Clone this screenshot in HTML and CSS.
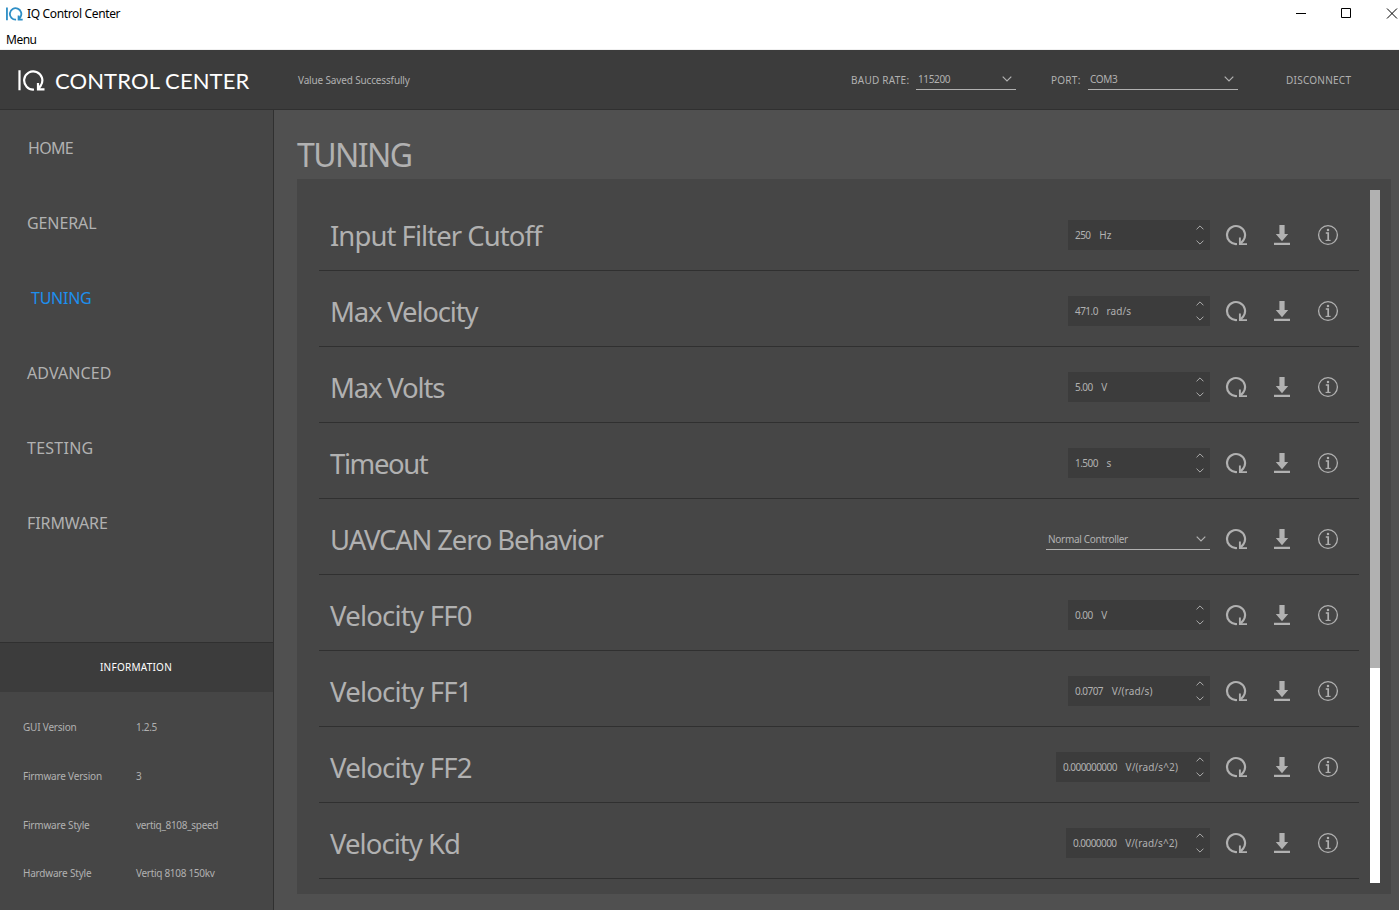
FILE: index.html
```
<!DOCTYPE html>
<html lang="en">
<head>
<meta charset="utf-8">
<title>IQ Control Center</title>
<link rel="stylesheet" href="styles.css">
</head>
<body>
<svg class="defs" width="0" height="0">
  <symbol id="refresh" viewBox="0 0 22 22">
    <path d="M12 20A9 9 0 1 1 18.2 16.5L15.5 19.5" fill="none" stroke="currentColor" stroke-width="2.2"/>
    <path d="M14.9 13.5V20.1H22" fill="none" stroke="currentColor" stroke-width="1.9"/>
  </symbol>
  <symbol id="save" viewBox="0 0 22 22">
    <path d="M8.4 1H13.6V10H17.2L11 17.2L4.8 10H8.4Z M3 18.7H19V21H3Z" fill="currentColor"/>
  </symbol>
  <symbol id="info" viewBox="0 0 22 22">
    <circle cx="11" cy="11" r="9.4" fill="none" stroke="currentColor" stroke-width="1.3"/>
    <circle cx="11" cy="5.9" r="1.25" fill="currentColor"/>
    <path d="M8.8 9H11.2V16.2" fill="none" stroke="currentColor" stroke-width="1.7"/>
    <path d="M8.6 16.4H13.6" fill="none" stroke="currentColor" stroke-width="1.1"/>
  </symbol>
  <symbol id="down" viewBox="0 0 10 6"><path d="M.7 .7L5 5L9.3 .7" fill="none" stroke="currentColor" stroke-width="1.2"/></symbol>
  <symbol id="logo" viewBox="0 0 27 21">
    <path d="M1.5 .3V20.3M16 19.5A9.1 9.1 0 1 1 22.8 15.5L20.3 18.8M20 13V19.4H26.5" fill="none" stroke="currentColor"/>
  </symbol>
</svg>
<div class="window">
  <div class="titlebar">
    <svg class="app-icon"><use href="#logo"/></svg>
    <span class="app-name">IQ Control Center</span>
    <svg class="win-buttons" viewBox="0 0 108 27">
      <path d="M5 13.5H15M50.5 8.5H59.5V17.5H50.5ZM96 8.5L106 18.5M106 8.5L96 18.5" fill="none" stroke="#000"/>
    </svg>
  </div>
  <div class="menubar">Menu</div>
  <header class="header">
    <svg class="logo"><use href="#logo"/></svg>
    <span class="brand">CONTROL CENTER</span>
    <span class="status">Value Saved Successfully</span>
    <span class="field-name caps">BAUD RATE:</span>
    <span class="select baud"><span>115200</span><svg class="chev"><use href="#down"/></svg></span>
    <span class="field-name caps port-name">PORT:</span>
    <span class="select port"><span>COM3</span><svg class="chev"><use href="#down"/></svg></span>
    <span class="disconnect caps">DISCONNECT</span>
  </header>
  <div class="body">
    <aside class="sidebar">
      <nav class="nav">
        <a class="home">HOME</a><a>GENERAL</a><a class="active">TUNING</a><a class="plain">ADVANCED</a><a class="wide">TESTING</a><a>FIRMWARE</a>
      </nav>
      <div class="info-head caps">INFORMATION</div>
      <dl class="info">
        <dt>GUI Version</dt><dd>1.2.5</dd>
        <dt>Firmware Version</dt><dd>3</dd>
        <dt>Firmware Style</dt><dd>vertiq_8108_speed</dd>
        <dt>Hardware Style</dt><dd>Vertiq 8108 150kv</dd>
      </dl>
    </aside>
    <main class="main">
      <h1 class="title">TUNING</h1>
      <section class="panel">
        <div class="rows">
          <div class="row"><span class="label loose">Input Filter Cutoff</span><span class="spin"><span class="num">250</span><span class="unit">Hz</span><span class="arrows"><svg class="up"><use href="#down"/></svg><svg><use href="#down"/></svg></span></span><svg class="icon"><use href="#refresh"/></svg><svg class="icon"><use href="#save"/></svg><svg class="icon"><use href="#info"/></svg></div>
          <div class="row"><span class="label">Max Velocity</span><span class="spin"><span class="num">471.0</span><span class="unit">rad/s</span><span class="arrows"><svg class="up"><use href="#down"/></svg><svg><use href="#down"/></svg></span></span><svg class="icon"><use href="#refresh"/></svg><svg class="icon"><use href="#save"/></svg><svg class="icon"><use href="#info"/></svg></div>
          <div class="row"><span class="label">Max Volts</span><span class="spin"><span class="num">5.00</span><span class="unit">V</span><span class="arrows"><svg class="up"><use href="#down"/></svg><svg><use href="#down"/></svg></span></span><svg class="icon"><use href="#refresh"/></svg><svg class="icon"><use href="#save"/></svg><svg class="icon"><use href="#info"/></svg></div>
          <div class="row"><span class="label tight">Timeout</span><span class="spin"><span class="num">1.500</span><span class="unit">s</span><span class="arrows"><svg class="up"><use href="#down"/></svg><svg><use href="#down"/></svg></span></span><svg class="icon"><use href="#refresh"/></svg><svg class="icon"><use href="#save"/></svg><svg class="icon"><use href="#info"/></svg></div>
          <div class="row"><span class="label">UAVCAN Zero Behavior</span><span class="select behavior"><span>Normal Controller</span><svg class="chev"><use href="#down"/></svg></span><svg class="icon"><use href="#refresh"/></svg><svg class="icon"><use href="#save"/></svg><svg class="icon"><use href="#info"/></svg></div>
          <div class="row"><span class="label looser">Velocity FF0</span><span class="spin"><span class="num">0.00</span><span class="unit">V</span><span class="arrows"><svg class="up"><use href="#down"/></svg><svg><use href="#down"/></svg></span></span><svg class="icon"><use href="#refresh"/></svg><svg class="icon"><use href="#save"/></svg><svg class="icon"><use href="#info"/></svg></div>
          <div class="row"><span class="label looser">Velocity FF1</span><span class="spin"><span class="num">0.0707</span><span class="unit">V/(rad/s)</span><span class="arrows"><svg class="up"><use href="#down"/></svg><svg><use href="#down"/></svg></span></span><svg class="icon"><use href="#refresh"/></svg><svg class="icon"><use href="#save"/></svg><svg class="icon"><use href="#info"/></svg></div>
          <div class="row"><span class="label looser">Velocity FF2</span><span class="spin spin-xl"><span class="num">0.000000000</span><span class="unit">V/(rad/s^2)</span><span class="arrows"><svg class="up"><use href="#down"/></svg><svg><use href="#down"/></svg></span></span><svg class="icon"><use href="#refresh"/></svg><svg class="icon"><use href="#save"/></svg><svg class="icon"><use href="#info"/></svg></div>
          <div class="row"><span class="label loose">Velocity Kd</span><span class="spin spin-l"><span class="num">0.0000000</span><span class="unit">V/(rad/s^2)</span><span class="arrows"><svg class="up"><use href="#down"/></svg><svg><use href="#down"/></svg></span></span><svg class="icon"><use href="#refresh"/></svg><svg class="icon"><use href="#save"/></svg><svg class="icon"><use href="#info"/></svg></div>
        </div>
        <div class="scrollbar"><div class="thumb"></div></div>
      </section>
    </main>
  </div>
</div>
</body>
</html>
```
FILE: styles.css
```
* { box-sizing: border-box; }
body { margin: 0; font-family: "Noto Sans", sans-serif; font-size: 10px; letter-spacing: -0.15px; color: #b1b1b1; white-space: nowrap; }
svg { display: block; flex: none; }
.defs { position: absolute; }
.window { display: flex; flex-direction: column; width: 1399px; height: 910px; overflow: hidden; background: #505050; }

.titlebar { display: flex; align-items: center; height: 27px; padding-left: 6px; background: #fff; color: #000; font-size: 12px; letter-spacing: -0.35px; }
.app-icon { width: 17px; height: 14px; margin-right: 4px; color: #2f8fc6; stroke-width: 2.9; }
.win-buttons { width: 108px; height: 27px; margin-left: auto; }
.menubar { height: 23px; padding-left: 6px; background: #fff; border-bottom: 1px solid #f0f0f0; color: #000; font-size: 12px; line-height: 25px; letter-spacing: -0.5px; }

.header { display: flex; align-items: center; height: 60px; padding-left: 18px; background: #3c3c3c; border-bottom: 1px solid #303030; }
.logo { width: 27px; height: 21px; margin-top: 1px; color: #fff; stroke-width: 2.2; }
.brand { width: 243px; margin-left: 10px; padding-top: 2px; font-family: Lato, sans-serif; font-size: 22px; letter-spacing: 0.1px; color: #fff; }
.status { width: 553px; }
.caps { letter-spacing: 0.25px; }
.field-name { width: 65px; }
.select { display: flex; align-items: center; justify-content: space-between; height: 20px; border-bottom: 1px solid #b1b1b1; padding: 0 4px 0 2px; letter-spacing: -0.35px; }
.chev { width: 10px; height: 6px; }
.baud { width: 100px; }
.port-name { width: 37px; margin-left: 35px; }
.port { width: 150px; }
.disconnect { margin-left: 48px; }

.body { display: flex; flex: 1; min-height: 0; }
.sidebar { display: flex; flex-direction: column; width: 274px; background: #464646; border-right: 1px solid #303030; }
.nav { display: flex; flex-direction: column; height: 532px; }
.nav a { height: 75px; padding-left: 27px; font-size: 16px; line-height: 76px; letter-spacing: -0.1px; }
.nav .home { padding-left: 28px; letter-spacing: -0.7px; }
.nav .active { padding-left: 31px; letter-spacing: -0.25px; color: #1d8fee; }
.nav .plain { letter-spacing: 0.1px; }
.nav .wide { letter-spacing: 0.25px; }
.info-head { height: 50px; padding-right: 1px; background: #3c3c3c; border-top: 1px solid #303030; color: #fff; line-height: 48px; text-align: center; }
.info { display: grid; grid-template-columns: 113px 1fr; grid-auto-rows: 48.7px; align-items: center; margin: 0; padding: 11px 0 0 23px; }
.info dt { letter-spacing: -0.2px; }
.info dd { margin: 0; letter-spacing: -0.3px; }

.main { flex: 1; padding: 23px 8px 0 23px; }
.title { height: 46px; margin: 0; font-size: 32px; font-weight: 400; line-height: 44px; letter-spacing: -1.6px; }
.panel { display: flex; height: 715px; padding: 16px 11px 0 22px; background: #464646; }
.rows { width: 1040px; }
.row { display: flex; align-items: center; height: 76px; padding: 5px 20px 0 11px; border-bottom: 1px solid #303030; }
.label { flex: 1; padding-top: 1px; font-size: 27.5px; line-height: 40px; letter-spacing: -1.18px; }
.loose { letter-spacing: -0.95px; }
.looser { letter-spacing: -0.77px; }
.tight { letter-spacing: -1.4px; }
.spin { display: flex; align-items: center; width: 142px; height: 30px; padding: 0 6px 1px 7px; background: #3c3c3c; }
.spin-l { width: 144px; }
.spin-xl { width: 154px; }
.num { margin-right: 8.7px; letter-spacing: -0.55px; }
.unit { letter-spacing: 0.1px; }
.arrows { display: flex; flex-direction: column; gap: 10px; margin-left: auto; padding-top: 1px; }
.arrows svg { width: 8px; height: 5px; }
.up { transform: scaleY(-1); }
.behavior { width: 164px; height: 21px; letter-spacing: -0.3px; }
.icon { width: 22px; height: 22px; margin-left: 24px; }
.select + .icon, .spin + .icon { margin-left: 15px; }
.scrollbar { width: 10px; height: 693px; margin: -5px 0 0 auto; background: #fff; }
.thumb { height: 478px; background: #b1b1b1; }
```
